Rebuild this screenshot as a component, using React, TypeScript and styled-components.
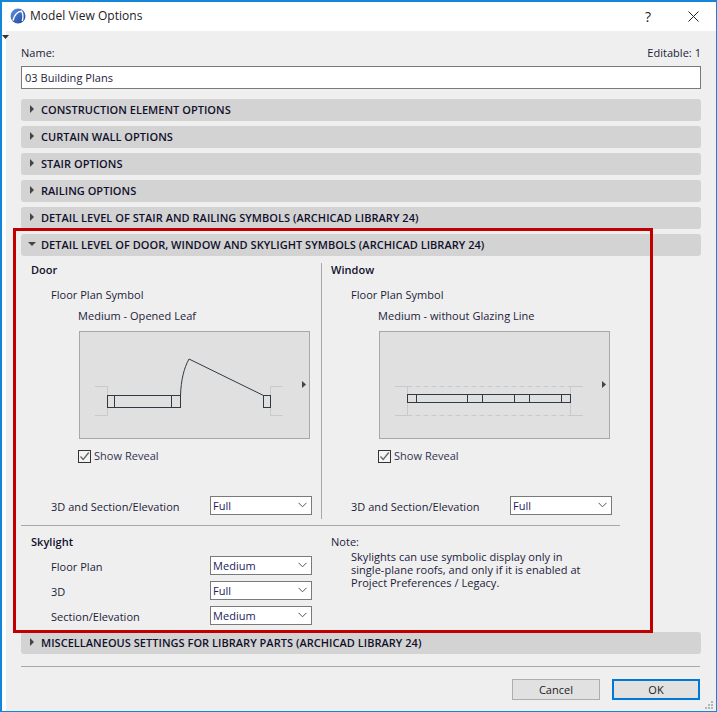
import React from 'react'
import styled, { createGlobalStyle } from 'styled-components'

const Global = createGlobalStyle`
  html, body { margin: 0; padding: 0; background: #fff; }
  * { box-sizing: border-box; }
  body { font-family: "Open Sans", "Liberation Sans", sans-serif; font-size: 11px; letter-spacing: .03px; color: #1c1c3a; }
`

const Dialog = styled.div`
  position: relative;
  width: 717px;
  height: 712px;
  border: 1px solid #1585d8;
  border-width: 2px 1px 1px 2px;
  background: #fff;
  display: flex;
  flex-direction: column;
  overflow: hidden;
`

const TitleBar = styled.div`
  height: 29px;
  flex: none;
  display: flex;
  align-items: center;
  padding: 0 0 1px 8px;
  gap: 4px;
  font-size: 12px;
  color: #222;
`

const TitleText = styled.span`
  padding-bottom: 1px;
`

const TitleActions = styled.div`
  margin-left: auto;
  display: flex;
  align-items: center;
  gap: 37px;
  padding-right: 17px;
  font-size: 14px;
  color: #222;
`

const Body = styled.div`
  position: relative;
  flex: 1;
  margin-left: 4px;
  background: #efefef;
  padding: 14px 15px 0 15px;
  display: flex;
  flex-direction: column;
`

const Pin = styled.svg`
  position: absolute;
  left: -4px;
  top: 4px;
`

const NameRow = styled.div`
  display: flex;
  justify-content: space-between;
  height: 21px;
  line-height: 16px;
`

const NameInput = styled.div`
  height: 23px;
  flex: none;
  border: 1px solid #7a7a7a;
  background: #fff;
  padding-left: 3px;
  line-height: 22px;
  font-size: 11px;
  margin-bottom: 10px;
`

const Bar = styled.div<{ $gap?: number }>`
  height: 22px;
  flex: none;
  margin-bottom: ${p => p.$gap ?? 5}px;
  border-radius: 3px;
  background: #d3d3d3;
  display: flex;
  align-items: center;
  gap: 6px;
  padding: 0 0 2px 8px;
  font-size: 11px;
  font-weight: 600;
  color: #10102c;
`

const Columns = styled.div`
  display: grid;
  grid-template-columns: 300px 300px;
  height: 269px;
  flex: none;
  padding-top: 7px;
`

const Column = styled.div<{ $divided?: boolean }>`
  padding-left: ${p => (p.$divided ? 9 : 10)}px;
  height: 256px;
  border-left: ${p => (p.$divided ? '1px solid #a8a8a8' : 'none')};
`

const Heading = styled.div`
  font-weight: 600;
  line-height: 13px;
  color: #10102c;
`

const SymbolLabel = styled.div`
  padding-left: 20px;
  margin-top: 11px;
  line-height: 15px;
`

const VariantLabel = styled.div`
  padding-left: 47px;
  margin-top: 6px;
  line-height: 15px;
`

const Preview = styled.div`
  width: 231px;
  height: 108px;
  margin: 8px 0 0 48px;
  border: 1px solid #a8a8a8;
  background: #e0e0e0;

  svg { display: block; }
`

const CheckRow = styled.label`
  display: flex;
  align-items: center;
  gap: 3px;
  margin: 9px 0 0 47px;
  height: 14px;
  color: #333350;
`

const Box = styled.span`
  width: 13px;
  height: 13px;
  margin-top: 2px;
  border: 1px solid #333;
  background: #f4f4f4;
  display: flex;
`

const FieldRow = styled.div<{ $top?: number }>`
  display: grid;
  grid-template-columns: 159px 102px;
  align-items: center;
  padding-left: 20px;
  margin-top: ${p => p.$top ?? 0}px;
`

const FieldLabel = styled.span`
  padding-top: 1px;
`

const Select = styled.div`
  height: 19px;
  border: 1px solid #7a7a7a;
  background: #fff;
  padding: 0 4px 1px 2px;
  display: flex;
  align-items: center;
  justify-content: space-between;
  color: #1c1c5a;
`

const Rule = styled.div<{ $inset?: number }>`
  height: 1px;
  flex: none;
  background: #a8a8a8;
  margin-right: ${p => p.$inset ?? 0}px;
`

const Lower = styled.div`
  display: grid;
  grid-template-columns: 300px 300px;
  height: 106px;
  flex: none;
`

const SkylightPane = styled.div`
  padding: 9px 0 0 10px;
`

const NotePane = styled.div`
  padding: 9px 0 0 10px;
  line-height: 13px;
`

const NoteText = styled.div`
  padding-left: 20px;
  margin-top: 2px;
`

const Footer = styled.div`
  display: flex;
  justify-content: flex-end;
  gap: 12px;
  padding: 12px 1px 0 0;
`

const Button = styled.div<{ $primary?: boolean }>`
  width: 88px;
  height: 21px;
  background: #e1e1e1;
  border: ${p => (p.$primary ? '2px solid #0078d7' : '1px solid #adadad')};
  display: flex;
  align-items: center;
  justify-content: center;
  color: #222;
`

const Highlight = styled.div`
  position: absolute;
  left: 11px;
  top: 226px;
  width: 640px;
  height: 405px;
  border: 3px solid #c00000;
  pointer-events: none;
`

const Grip = styled.svg`
  position: absolute;
  right: 2px;
  bottom: 1px;
`

const Logo = () => (
  <svg width="16" height="16" viewBox="0 0 16 16">
    <defs>
      <linearGradient id="ball" x1="0" y1="0" x2="1" y2="1">
        <stop offset="0" stopColor="#5f94e6" />
        <stop offset="1" stopColor="#1d429a" />
      </linearGradient>
    </defs>
    <circle cx="8" cy="8" r="7.5" fill="url(#ball)" />
    <path d="M3 12.5C4 7 8 3 11.5 3.2C13 5.5 13.2 9.5 12.3 13" fill="none" stroke="#fff" strokeWidth="1.4" />
  </svg>
)

const Caret = ({ open }: { open?: boolean }) => (
  <svg width="6" height="8" viewBox="0 0 6 8" style={{ overflow: 'visible' }}>
    {open ? <path d="M-1 2H7L3 6Z" fill="#444" /> : <path d="M1 0L5 4L1 8Z" fill="#444" />}
  </svg>
)

const Chevron = () => (
  <svg width="9" height="6" viewBox="0 0 9 6">
    <path d="M.5 .8L4.5 4.8L8.5 .8" fill="none" stroke="#555" strokeWidth="1" />
  </svg>
)

const Check = () => (
  <svg width="11" height="11" viewBox="0 0 11 11">
    <path d="M1.5 5.5L4.2 8.5L9.8 1.5" fill="none" stroke="#666" strokeWidth="1.3" />
  </svg>
)

const Dropdown = ({ value }: { value: string }) => (
  <Select>
    {value}
    <Chevron />
  </Select>
)

const line = '#2f3a44'
const reveal = '#c9c9c9'

const DoorSymbol = () => (
  <svg width="229" height="106" viewBox="0 0 229 106">
    <g fill="none" stroke={reveal}>
      <path d="M15 54.5H27.5V83.5H15" />
      <path d="M202.5 54.5H190.5V83.5H202.5" />
    </g>
    <g fill="none" stroke={line}>
      <rect x="27.5" y="63.5" width="73" height="12" />
      <path d="M34.5 63.5V75.5M91.5 63.5V75.5" />
      <path d="M100.5 63.5C101 48 104 36 109 27L183.5 63.5" />
      <rect x="183.5" y="63.5" width="7" height="12" />
    </g>
    <path d="M222 49L226 52.5L222 56Z" fill="#444" />
  </svg>
)

const WindowSymbol = () => (
  <svg width="229" height="106" viewBox="0 0 229 106">
    <g fill="none" stroke={reveal}>
      <path d="M15 54.5H27.5V83.5H15" />
      <path d="M203 54.5H190.5V83.5H203" />
      <path d="M27.5 54.5H190.5M27.5 83.5H190.5" strokeDasharray="5 3" />
    </g>
    <g fill="none" stroke={line}>
      <rect x="27.5" y="62.5" width="163" height="8" />
      <path d="M36.5 62.5V70.5M87.5 62.5V70.5M102.5 62.5V70.5M134.5 62.5V70.5M149.5 62.5V70.5M181.5 62.5V70.5" />
    </g>
    <path d="M222 49L226 52.5L222 56Z" fill="#444" />
  </svg>
)

const closedBars = [
  'CONSTRUCTION ELEMENT OPTIONS',
  'CURTAIN WALL OPTIONS',
  'STAIR OPTIONS',
  'RAILING OPTIONS',
  'DETAIL LEVEL OF STAIR AND RAILING SYMBOLS (ARCHICAD LIBRARY 24)',
]

const SymbolColumn = ({ title, variant, divided, children }: { title: string; variant: string; divided?: boolean; children: React.ReactNode }) => (
  <Column $divided={divided}>
    <Heading>{title}</Heading>
    <SymbolLabel>Floor Plan Symbol</SymbolLabel>
    <VariantLabel>{variant}</VariantLabel>
    <Preview>{children}</Preview>
    <CheckRow>
      <Box><Check /></Box>
      Show Reveal
    </CheckRow>
    <FieldRow $top={34}>
      <FieldLabel>3D and Section/Elevation</FieldLabel>
      <Dropdown value="Full" />
    </FieldRow>
  </Column>
)

export default function App() {
  return (
    <>
      <Global />
      <Dialog>
        <TitleBar>
          <Logo />
          <TitleText>Model View Options</TitleText>
          <TitleActions>
            <span>?</span>
            <svg width="11" height="11" viewBox="0 0 11 11">
              <path d="M.5 .5L10.5 10.5M10.5 .5L.5 10.5" stroke="#222" strokeWidth="1" />
            </svg>
          </TitleActions>
        </TitleBar>
        <Body>
          <Pin width="8" height="5" viewBox="0 0 8 5"><path d="M0 0H7L3.5 4Z" fill="#333" /></Pin>
          <NameRow>
            <span>Name:</span>
            <span>Editable: 1</span>
          </NameRow>
          <NameInput>03 Building Plans</NameInput>
          {closedBars.map(text => (
            <Bar key={text}><Caret />{text}</Bar>
          ))}
          <Bar $gap={0}><Caret open />DETAIL LEVEL OF DOOR, WINDOW AND SKYLIGHT SYMBOLS (ARCHICAD LIBRARY 24)</Bar>
          <Columns>
            <SymbolColumn title="Door" variant="Medium - Opened Leaf"><DoorSymbol /></SymbolColumn>
            <SymbolColumn title="Window" variant="Medium - without Glazing Line" divided><WindowSymbol /></SymbolColumn>
          </Columns>
          <Rule $inset={81} />
          <Lower>
            <SkylightPane>
              <Heading>Skylight</Heading>
              <FieldRow $top={8}><FieldLabel>Floor Plan</FieldLabel><Dropdown value="Medium" /></FieldRow>
              <FieldRow $top={6}><FieldLabel>3D</FieldLabel><Dropdown value="Full" /></FieldRow>
              <FieldRow $top={6}><FieldLabel>Section/Elevation</FieldLabel><Dropdown value="Medium" /></FieldRow>
            </SkylightPane>
            <NotePane>
              <div>Note:</div>
              <NoteText>
                Skylights can use symbolic display only in<br />
                single-plane roofs, and only if it is enabled at<br />
                Project Preferences / Legacy.
              </NoteText>
            </NotePane>
          </Lower>
          <Bar $gap={12}><Caret />MISCELLANEOUS SETTINGS FOR LIBRARY PARTS (ARCHICAD LIBRARY 24)</Bar>
          <Rule $inset={1} />
          <Footer>
            <Button>Cancel</Button>
            <Button $primary>OK</Button>
          </Footer>
        </Body>
        <Highlight />
        <Grip width="10" height="10" viewBox="0 0 10 10">
          <path d="M7 1h2v2H7zM4 4h2v2H4zM7 4h2v2H7zM1 7h2v2H1zM4 7h2v2H4zM7 7h2v2H7z" fill="#b5b5b5" />
        </Grip>
      </Dialog>
    </>
  )
}
